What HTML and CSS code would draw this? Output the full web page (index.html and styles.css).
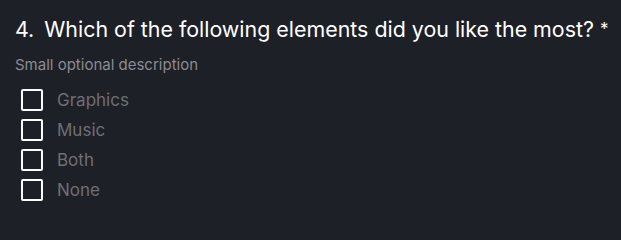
FILE: index.html
```html
<!DOCTYPE html>
<html lang="en">
<head>
<meta charset="utf-8">
<title>Question</title>
<link rel="stylesheet" href="styles.css">
</head>
<body>
<section class="question">
  <h2 class="title"><span class="num">4.</span>Which of the following elements did you like the most? <span class="req">*</span></h2>
  <p class="desc">Small optional description</p>
  <ul class="options">
    <li class="option"><span class="box"></span><span class="label">Graphics</span></li>
    <li class="option"><span class="box"></span><span class="label">Music</span></li>
    <li class="option"><span class="box"></span><span class="label">Both</span></li>
    <li class="option"><span class="box"></span><span class="label">None</span></li>
  </ul>
</section>
</body>
</html>
```
FILE: styles.css
```css
html, body {
  margin: 0;
  padding: 0;
  background: #1e2028;
  height: 100%;
}
body {
  font-family: Inter, "Noto Sans", sans-serif;
  color: #ffffff;
}
.question {
  padding: 14px 15px 0 15px;
}
.title {
  margin: 0;
  font-size: 21.4px;
  font-weight: 400;
  line-height: 30px;
  color: #ffffff;
  white-space: nowrap;
}
.num {
  margin-right: 10px;
}
.req {
  font-size: 17px;
  vertical-align: top;
}
.desc {
  margin: 12px 0 0 0;
  font-size: 15px;
  line-height: 18px;
  color: #8a8c92;
}
.options {
  list-style: none;
  margin: 15px 0 0 0;
  padding: 0 0 0 6px;
  display: flex;
  flex-direction: column;
  gap: 9px;
}
.option {
  display: flex;
  align-items: center;
  gap: 14px;
  height: 21px;
}
.box {
  width: 22px;
  height: 22px;
  box-sizing: border-box;
  border: 2px solid #ffffff;
  border-radius: 2px;
  flex: none;
}
.label {
  font-size: 17px;
  color: #6e6f74;
}
```
